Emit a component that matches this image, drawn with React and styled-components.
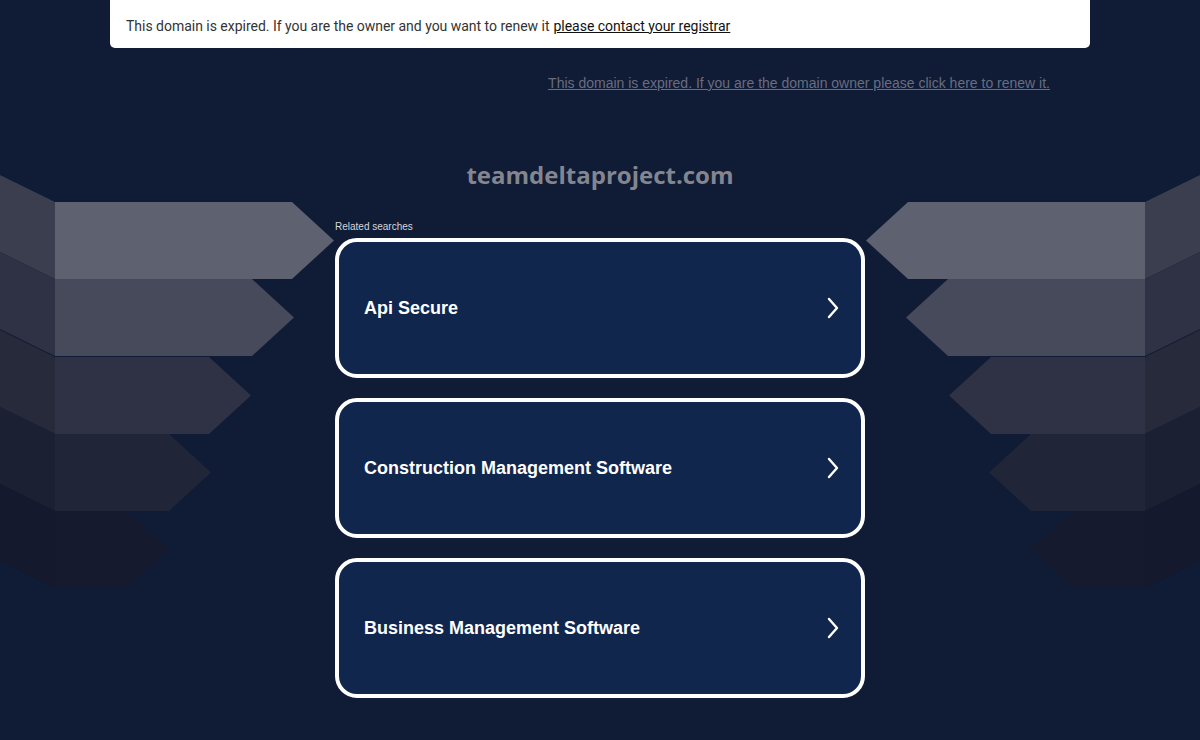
import React from "react";
import styled, { createGlobalStyle } from "styled-components";

const GlobalStyle = createGlobalStyle`
  html, body {
    margin: 0;
    padding: 0;
    background: #101b36;
  }
  body {
    font-family: "Liberation Sans", Arial, sans-serif;
    overflow: hidden;
  }
`;

const leftArrows = [
  { top: 202, right: 292, fill: "#5e6170", face: "#3b3e4f" },
  { top: 279, right: 252, fill: "#464a5a", face: "#2f3244" },
  { top: 357, right: 209, fill: "#2e3244", face: "#262a3b" },
  { top: 434, right: 169, fill: "#212538", face: "#1c2033" },
  { top: 511, right: 127, fill: "#151a2f", face: "#14192d" },
];

function Decoration() {
  const shapes = leftArrows.map((a, i) => {
    const h = 77;
    const bot = a.top + h;
    const mid = a.top + h / 2;
    const tip = a.right + 42;
    return (
      <g key={i}>
        <polygon
          points={`0,${a.top - 27} 55,${a.top} 55,${bot} 0,${bot - 27}`}
          fill={a.face}
        />
        <polygon
          points={`55,${a.top} ${a.right},${a.top} ${tip},${mid} ${a.right},${bot} 55,${bot}`}
          fill={a.fill}
        />
      </g>
    );
  });
  return (
    <Backdrop viewBox="0 0 1200 740" preserveAspectRatio="none">
      {shapes}
      <g transform="matrix(-1 0 0 1 1200 0)">{shapes}</g>
    </Backdrop>
  );
}

const Backdrop = styled.svg`
  position: absolute;
  left: 0;
  top: 0;
  width: 1200px;
  height: 740px;
  pointer-events: none;
`;

const Page = styled.div`
  position: relative;
  width: 1200px;
  height: 740px;
`;

const Content = styled.div`
  position: relative;
  display: flex;
  flex-direction: column;
  align-items: center;
`;

const Notice = styled.div`
  box-sizing: border-box;
  width: 980px;
  height: 48px;
  background: #fff;
  border-radius: 0 0 5px 5px;
  padding: 3px 16px 0;
  display: flex;
  align-items: center;
  font-family: Roboto, "Open Sans", sans-serif;
  font-size: 14px;
  letter-spacing: -0.02px;
  color: #333;

  a {
    color: #111;
    text-decoration: underline;
    margin-left: 4px;
  }
`;

const RenewLine = styled.div`
  box-sizing: border-box;
  width: 980px;
  padding: 27px 40px 0 0;
  text-align: right;
  font-size: 14px;

  a {
    color: #686d80;
    text-decoration: underline;
  }
`;

const Domain = styled.h1`
  margin: 68px 0 0;
  font-family: "Open Sans", sans-serif;
  font-weight: 700;
  font-size: 24px;
  line-height: 32px;
  color: #83868f;
`;

const Results = styled.div`
  width: 530px;
  margin-top: 30px;
  display: flex;
  flex-direction: column;
  gap: 20px;
`;

const Label = styled.div`
  font-size: 10px;
  color: #d4d6dc;
  line-height: 12px;
  margin-bottom: -15px;
`;

const Card = styled.a`
  box-sizing: border-box;
  height: 140px;
  border: 4px solid #fff;
  border-radius: 22px;
  background: #11264d;
  display: flex;
  align-items: center;
  justify-content: space-between;
  padding: 0 21px 0 25px;
  color: #fff;
  font-size: 18px;
  font-weight: 700;
  text-decoration: none;
`;

const Chevron = () => (
  <svg width="14" height="24" viewBox="0 0 14 24">
    <polyline
      points="3,3 11,12 3,21"
      fill="none"
      stroke="#fff"
      strokeWidth="2.4"
      strokeLinecap="round"
      strokeLinejoin="round"
    />
  </svg>
);

const searches = [
  "Api Secure",
  "Construction Management Software",
  "Business Management Software",
];

export default function App() {
  return (
    <Page>
      <GlobalStyle />
      <Decoration />
      <Content>
        <Notice>
          This domain is expired. If you are the owner and you want to renew it
          <a href="#">please contact your registrar</a>
        </Notice>
        <RenewLine>
          <a href="#">
            This domain is expired. If you are the domain owner please click
            here to renew it.
          </a>
        </RenewLine>
        <Domain>teamdeltaproject.com</Domain>
        <Results>
          <Label>Related searches</Label>
          {searches.map((s) => (
            <Card href="#" key={s}>
              <span>{s}</span>
              <Chevron />
            </Card>
          ))}
        </Results>
      </Content>
    </Page>
  );
}
